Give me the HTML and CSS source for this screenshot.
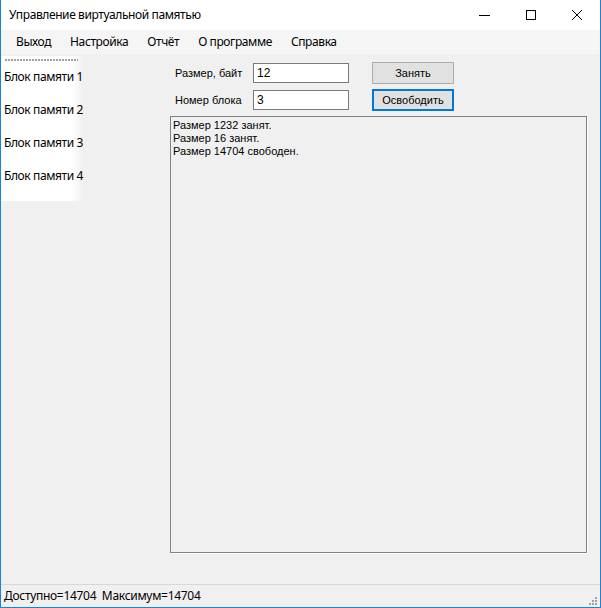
FILE: index.html
```html
<!DOCTYPE html>
<html lang="ru">
<head>
<meta charset="utf-8">
<title>Управление виртуальной памятью</title>
<link rel="stylesheet" href="styles.css">
</head>
<body>
<div class="window">
  <div class="titlebar">
    <span class="title">Управление виртуальной памятью</span>
    <div class="controls">
      <span class="ctl"><svg width="12" height="12" viewBox="0 0 12 12"><path d="M0 6.5h11" stroke="#000" stroke-width="1"/></svg></span>
      <span class="ctl"><svg width="12" height="12" viewBox="0 0 12 12"><rect x="1.5" y="1.5" width="9" height="9" fill="none" stroke="#000" stroke-width="1"/></svg></span>
      <span class="ctl"><svg width="12" height="12" viewBox="0 0 12 12"><path d="M1 1L11 11M11 1L1 11" stroke="#000" stroke-width="1"/></svg></span>
    </div>
  </div>
  <div class="menubar">
    <span class="menu-item">Выход</span>
    <span class="menu-item">Настройка</span>
    <span class="menu-item">Отчёт</span>
    <span class="menu-item">О программе</span>
    <span class="menu-item">Справка</span>
  </div>
  <div class="client">
    <div class="side">
      <div class="grip"></div>
      <div class="side-item">Блок памяти 1</div>
      <div class="side-item">Блок памяти 2</div>
      <div class="side-item">Блок памяти 3</div>
      <div class="side-item">Блок памяти 4</div>
    </div>
    <div class="main">
      <div class="form">
        <label class="lbl">Размер, байт</label>
        <div class="tb">12</div>
        <button class="btn">Занять</button>
        <label class="lbl">Номер блока</label>
        <div class="tb">3</div>
        <button class="btn btn-focus">Освободить</button>
      </div>
      <div class="log">
        <div>Размер 1232 занят.</div>
        <div>Размер 16 занят.</div>
        <div>Размер 14704 свободен.</div>
      </div>
    </div>
  </div>
  <div class="statusbar">
    <span class="status-text">Доступно=14704&nbsp;&nbsp;Максимум=14704</span>
    <svg class="sgrip" width="10" height="10" viewBox="0 0 10 10">
      <rect x="7" y="1" width="2" height="2" fill="#a0a0a0"/>
      <rect x="4" y="4" width="2" height="2" fill="#a0a0a0"/>
      <rect x="7" y="4" width="2" height="2" fill="#a0a0a0"/>
      <rect x="1" y="7" width="2" height="2" fill="#a0a0a0"/>
      <rect x="4" y="7" width="2" height="2" fill="#a0a0a0"/>
      <rect x="7" y="7" width="2" height="2" fill="#a0a0a0"/>
    </svg>
  </div>
</div>
</body>
</html>
```
FILE: styles.css
```css
html, body {
  margin: 0;
  padding: 0;
  background: #f0f0f0;
}
.window {
  width: 601px;
  height: 608px;
  box-sizing: border-box;
  border-left: 1px solid #1883d7;
  border-right: 1px solid #1883d7;
  border-bottom: 1px solid #1883d7;
  display: flex;
  flex-direction: column;
  font-family: "Noto Sans", "Open Sans", sans-serif;
  font-size: 12px;
  letter-spacing: -0.4px;
  color: #000;
  background: #f0f0f0;
}
.titlebar {
  height: 30px;
  flex: none;
  background: #fff;
  display: flex;
  align-items: center;
  justify-content: space-between;
}
.title {
  padding-left: 8px;
  padding-bottom: 1px;
}
.controls {
  display: flex;
  height: 30px;
}
.ctl {
  width: 46px;
  height: 30px;
  display: flex;
  align-items: center;
  justify-content: center;
}
.menubar {
  height: 24px;
  flex: none;
  background: #f5f5f5;
  display: flex;
  align-items: center;
  padding-left: 7px;
}
.menu-item {
  padding: 0 8px 1px;
  margin-right: 3px;
}
.client {
  flex: 1;
  display: flex;
  min-height: 0;
}
.side {
  width: 80px;
  height: 145px;
  margin-top: 2px;
  background: linear-gradient(to right, #ffffff 0, #ffffff 70px, #f0f0f0 82px);
  flex: none;
  padding-top: 3px;
  box-sizing: border-box;
}
.grip {
  margin: 0 3px 0 4px;
  height: 2px;
  background-image: radial-gradient(circle at 1px 1px, #a0a0a0 0.9px, transparent 1px);
  background-size: 3px 2px;
}
.side-item {
  height: 33px;
  line-height: 31px;
  padding-left: 3px;
  white-space: nowrap;
}
.main {
  flex: 1;
  display: flex;
  flex-direction: column;
  padding: 8px 13px 31px 89px;
  font-family: "Liberation Sans", Arial, sans-serif;
  font-size: 11px;
  letter-spacing: 0;
}
.form {
  display: grid;
  grid-template-columns: 78px 96px 81px;
  column-gap: 0;
  row-gap: 5px;
  align-items: center;
  padding-left: 5px;
  margin-bottom: 5px;
}
.lbl {
  white-space: nowrap;
}
.tb {
  height: 20px;
  box-sizing: border-box;
  border: 1px solid #7a7a7a;
  background: #fff;
  padding: 0 3px;
  line-height: 18px;
  font-size: 12px;
  width: 96px;
}
.btn {
  grid-column: 3;
  margin-left: 23px;
  width: 82px;
  height: 22px;
  box-sizing: border-box;
  border: 1px solid #adadad;
  background: #e1e1e1;
  font-family: "Liberation Sans", Arial, sans-serif;
  font-size: 11px;
  color: #000;
  padding: 0;
}
.btn-focus {
  border: 2px solid #0078d7;
}
.log {
  flex: 1;
  border: 1px solid #828282;
  box-shadow: 1px 1px 0 #ffffff;
  background: #f0f0f0;
  padding: 2px 2px;
  line-height: 13px;
  font-size: 11px;
}
.statusbar {
  height: 22px;
  flex: none;
  border-top: 1px solid #d7d7d7;
  display: flex;
  align-items: center;
  justify-content: space-between;
  letter-spacing: -0.3px;
}
.status-text {
  padding-left: 3px;
  padding-bottom: 1px;
}
.sgrip {
  margin-right: 2px;
  align-self: flex-end;
  margin-bottom: 1px;
}
```
